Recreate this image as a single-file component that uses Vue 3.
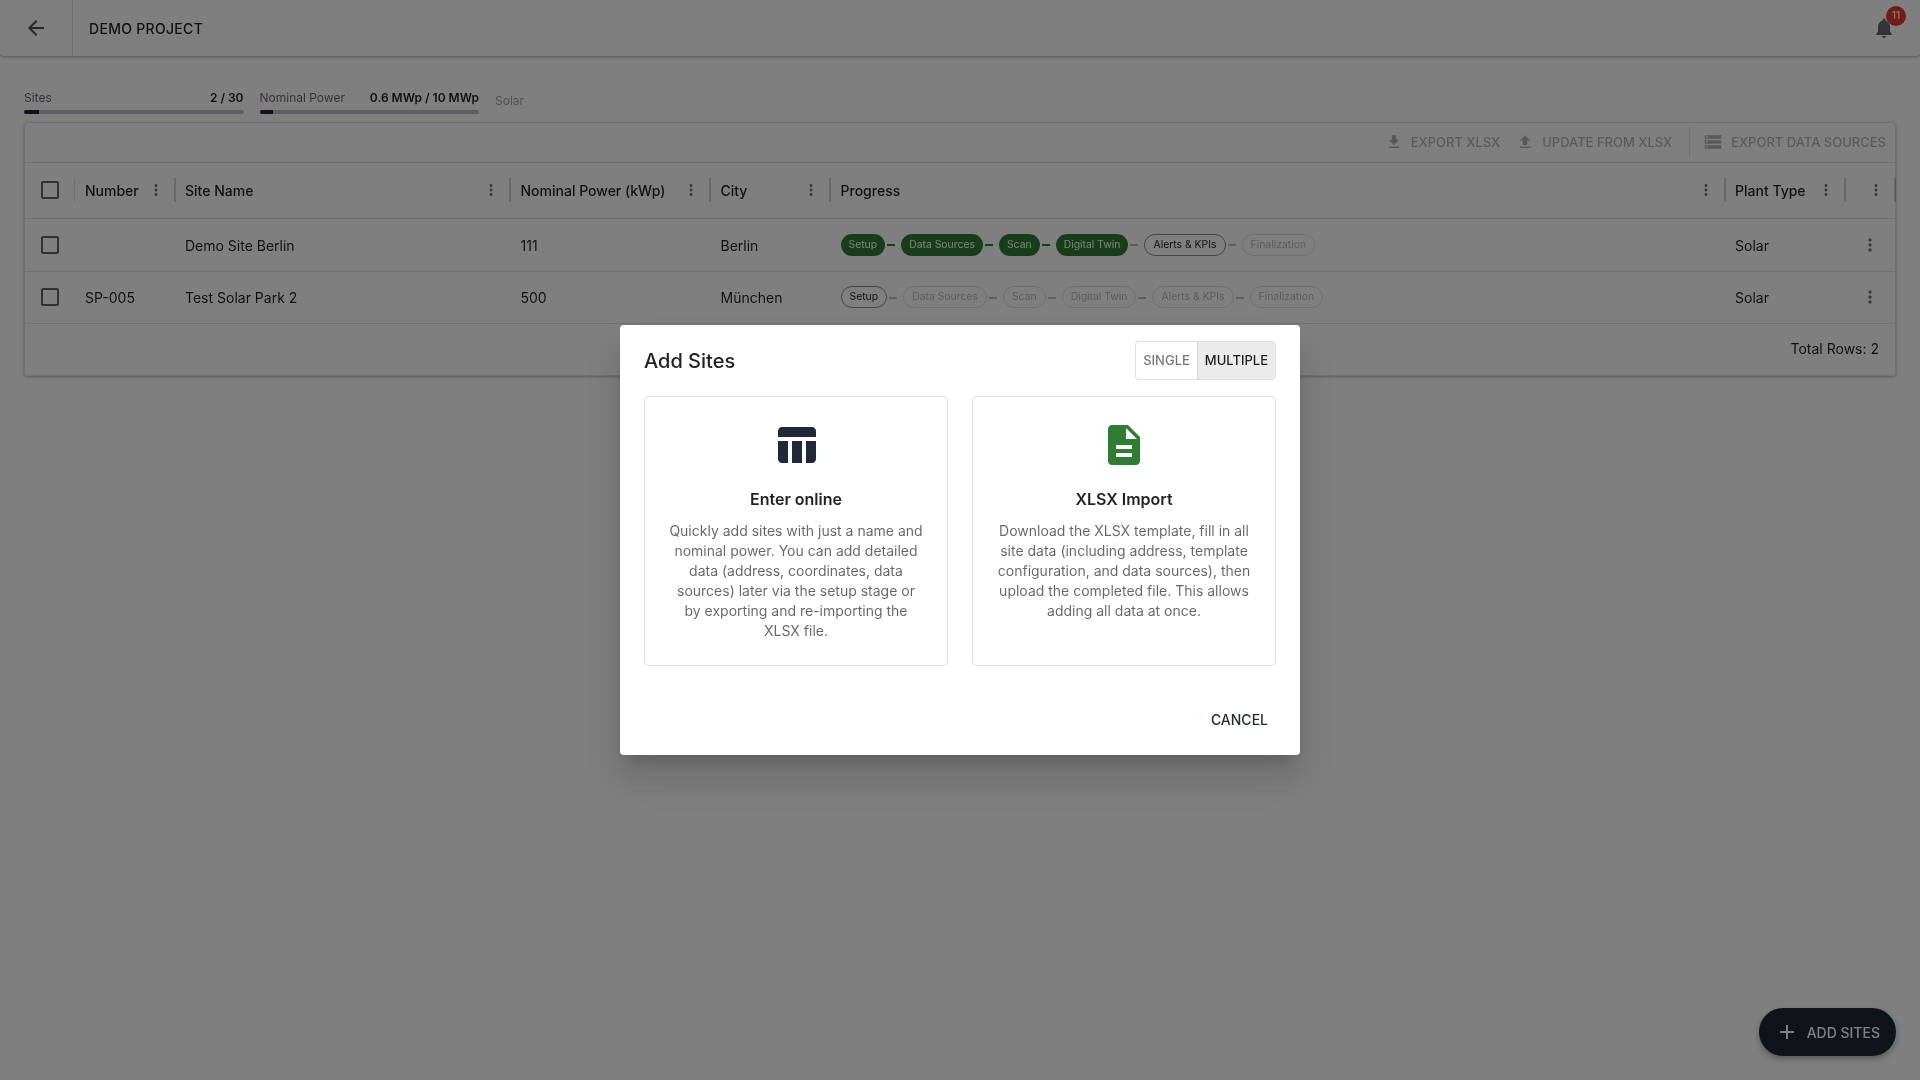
<script setup>
const ICON = {
  back: 'M20 11H7.83l5.59-5.59L12 4l-8 8 8 8 1.41-1.41L7.83 13H20v-2z',
  bell: 'M12 22c1.1 0 2-.9 2-2h-4c0 1.1.89 2 2 2zm6-6v-5c0-3.07-1.64-5.64-4.5-6.32V4c0-.83-.67-1.5-1.5-1.5s-1.5.67-1.5 1.5v.68C7.63 5.36 6 7.92 6 11v5l-2 2v1h16v-1l-2-2z',
  down: 'M5 20h14v-2H5v2zM19 9h-4V3H9v6H5l7 7 7-7z',
  up: 'M5 20h14v-2H5v2zm0-10h4v6h6v-6h4l-7-7-7 7z',
  storage: 'M2 20h20v-4H2v4zm2-3h2v2H4v-2zM2 4v4h20V4H2zm4 3H4V5h2v2zm-4 7h20v-4H2v4zm2-3h2v2H4v-2z',
  box: 'M19 5v14H5V5h14m0-2H5c-1.1 0-2 .9-2 2v14c0 1.1.9 2 2 2h14c1.1 0 2-.9 2-2V5c0-1.1-.9-2-2-2z',
  more: 'M12 8c1.1 0 2-.9 2-2s-.9-2-2-2-2 .9-2 2 .9 2 2 2zm0 2c-1.1 0-2 .9-2 2s.9 2 2 2 2-.9 2-2-.9-2-2-2zm0 6c-1.1 0-2 .9-2 2s.9 2 2 2 2-.9 2-2-.9-2-2-2z',
  table: 'M10 10.02h5V21h-5zM17 21h3c1.1 0 2-.9 2-2v-9h-5v11zm3-18H5c-1.1 0-2 .9-2 2v3h19V5c0-1.1-.9-2-2-2zM3 19c0 1.1.9 2 2 2h3V10H3v9z',
  file: 'M14 2H6c-1.1 0-1.99.9-1.99 2L4 20c0 1.1.89 2 1.99 2H18c1.1 0 2-.9 2-2V8l-6-6zm2 16H8v-2h8v2zm0-4H8v-2h8v2zm-3-5V3.5L18.5 9H13z',
  plus: 'M19 13h-6v6h-2v-6H5v-2h6V5h2v6h6v2z'
}
const stats = [
  { label: 'Sites', value: '2 / 30', pct: 6.67 },
  { label: 'Nominal Power', value: '0.6 MWp / 10 MWp', pct: 6 }
]
const actions = [
  { icon: ICON.down, label: 'EXPORT XLSX' },
  { icon: ICON.up, label: 'UPDATE FROM XLSX' }
]
const columns = ['Number', 'Site Name', 'Nominal Power (kWp)', 'City', 'Progress', 'Plant Type', '']
const stepNames = ['Setup', 'Data Sources', 'Scan', 'Digital Twin', 'Alerts & KPIs', 'Finalization']
const rows = [
  { number: '', name: 'Demo Site Berlin', power: '111', city: 'Berlin', done: 4 },
  { number: 'SP-005', name: 'Test Solar Park 2', power: '500', city: 'München', done: 0 }
]
function stepClass(i, done) {
  if (i < done) return 'done'
  if (i === done) return 'current'
  return 'todo'
}
const options = [
  {
    icon: ICON.table,
    tone: 'navy',
    title: 'Enter online',
    text: 'Quickly add sites with just a name and nominal power. You can add detailed data (address, coordinates, data sources) later via the setup stage or by exporting and re-importing the XLSX file.'
  },
  {
    icon: ICON.file,
    tone: 'green',
    title: 'XLSX Import',
    text: 'Download the XLSX template, fill in all site data (including address, template configuration, and data sources), then upload the completed file. This allows adding all data at once.'
  }
]
</script>

<template>
  <div class="page">
    <div class="under">
      <header class="topbar">
        <div class="back">
          <svg class="i24" viewBox="0 0 24 24"><path :d="ICON.back" /></svg>
        </div>
        <div class="project">DEMO PROJECT</div>
        <div class="bell">
          <svg class="i24" viewBox="0 0 24 24"><path :d="ICON.bell" /></svg>
          <span class="badge">11</span>
        </div>
      </header>

      <main class="content">
        <section class="stats">
          <div v-for="s in stats" :key="s.label" class="stat">
            <div class="stat-text">
              <span class="stat-label">{{ s.label }}</span>
              <span class="stat-value">{{ s.value }}</span>
            </div>
            <div class="track"><div class="fill" :style="{ width: s.pct + '%' }"></div></div>
          </div>
          <span class="solar">Solar</span>
        </section>

        <section class="card">
          <div class="toolbar">
            <div v-for="a in actions" :key="a.label" class="tool">
              <svg class="i18" viewBox="0 0 24 24"><path :d="a.icon" /></svg>
              <span>{{ a.label }}</span>
            </div>
            <div class="tool-sep"></div>
            <div class="tool last">
              <svg class="i20" viewBox="0 0 24 24"><path :d="ICON.storage" /></svg>
              <span>EXPORT DATA SOURCES</span>
            </div>
          </div>

          <div class="grid head">
            <div class="cell center sep thin">
              <svg class="i24 box" viewBox="0 0 24 24"><path :d="ICON.box" /></svg>
            </div>
            <div v-for="c in columns" :key="c" class="cell hcell sep">
              <span>{{ c }}</span>
              <svg class="i18 kebab" viewBox="0 0 24 24"><path :d="ICON.more" /></svg>
            </div>
          </div>

          <div v-for="r in rows" :key="r.name" class="grid row">
            <div class="cell center">
              <svg class="i24 box" viewBox="0 0 24 24"><path :d="ICON.box" /></svg>
            </div>
            <div class="cell">{{ r.number }}</div>
            <div class="cell">{{ r.name }}</div>
            <div class="cell">{{ r.power }}</div>
            <div class="cell">{{ r.city }}</div>
            <div class="cell steps">
              <template v-for="(n, i) in stepNames" :key="n">
                <span class="chip" :class="stepClass(i, r.done)">{{ n }}</span>
                <span v-if="i < stepNames.length - 1" class="link" :class="{ on: i < r.done - 1 }"></span>
              </template>
            </div>
            <div class="cell">Solar</div>
            <div class="cell center">
              <svg class="i20 kebab" viewBox="0 0 24 24"><path :d="ICON.more" /></svg>
            </div>
          </div>

          <div class="foot">Total Rows: 2</div>
        </section>
      </main>

      <button class="fab">
        <svg class="i24" viewBox="0 0 24 24"><path :d="ICON.plus" /></svg>
        <span>ADD SITES</span>
      </button>
    </div>

    <div class="overlay">
      <div class="dialog">
        <div class="dialog-head">
          <h2 class="dialog-title">Add Sites</h2>
          <div class="toggle">
            <span class="opt">SINGLE</span>
            <span class="opt active">MULTIPLE</span>
          </div>
        </div>
        <div class="dialog-body">
          <div v-for="o in options" :key="o.title" class="option">
            <svg class="i48" :class="o.tone" viewBox="0 0 24 24"><path :d="o.icon" /></svg>
            <div class="option-title">{{ o.title }}</div>
            <p class="option-text">{{ o.text }}</p>
          </div>
        </div>
        <div class="dialog-actions">
          <button class="cancel">CANCEL</button>
        </div>
      </div>
    </div>
  </div>
</template>

<style>
html, body { margin: 0; background: #fff; }
</style>

<style scoped>
.page {
  min-height: 1080px;
  background: #fff;
  font-family: Inter, "Liberation Sans", sans-serif;
  font-size: 14px;
  color: rgba(0, 0, 0, 0.87);
}
.under {
  position: relative;
  height: 1080px;
  filter: blur(0.5px);
}
svg { display: block; fill: currentColor; flex: none; }
.i18 { width: 18px; height: 18px; }
.i20 { width: 20px; height: 20px; }
.i24 { width: 24px; height: 24px; }
.i48 { width: 48px; height: 48px; }

.topbar {
  display: flex;
  align-items: center;
  height: 56px;
  background: #fff;
  border-radius: 0 0 4px 4px;
  box-shadow: 0 1px 3px rgba(0, 0, 0, 0.35);
}
.back {
  width: 73px;
  height: 56px;
  box-sizing: border-box;
  display: flex;
  align-items: center;
  justify-content: center;
  padding-right: 1px;
  border-right: 1px solid rgba(0, 0, 0, 0.12);
  color: rgba(0, 0, 0, 0.7);
}
.project {
  margin-left: 16px;
  font-weight: 500;
  letter-spacing: 0.3px;
  flex: 1;
}
.bell {
  position: relative;
  width: 24px;
  margin-right: 24px;
  color: rgba(0, 0, 0, 0.6);
}
.badge {
  position: absolute;
  top: -10px;
  left: 14px;
  min-width: 20px;
  height: 20px;
  border-radius: 10px;
  background: #e53935;
  color: #fff;
  font-size: 10.5px;
  line-height: 20px;
  text-align: center;
}

.content { padding: 34px 24px 0; }
.stats {
  display: flex;
  gap: 16px;
  height: 32px;
}
.stat { width: 219.5px; }
.stat-text {
  display: flex;
  justify-content: space-between;
  font-size: 12px;
  line-height: 16px;
  height: 20px;
}
.stat-label { color: rgba(0, 0, 0, 0.6); }
.stat-value { font-weight: 600; }
.track {
  height: 4px;
  border-radius: 2px;
  overflow: hidden;
  background: #bcbec6;
}
.fill { height: 100%; background: #1f2937; }
.solar {
  font-size: 12px;
  line-height: 20px;
  padding-top: 1px;
  color: rgba(0, 0, 0, 0.38);
}

.card {
  border: 1px solid #e0e0e0;
  border-radius: 4px;
  box-shadow: 0 1px 3px rgba(0, 0, 0, 0.3);
}
.toolbar {
  height: 38px;
  padding-bottom: 1px;
  display: flex;
  align-items: center;
  justify-content: flex-end;
  border-bottom: 1px solid #e0e0e0;
  color: rgba(0, 0, 0, 0.3);
  font-size: 13px;
  font-weight: 500;
}
.tool { display: flex; align-items: center; gap: 8px; margin-right: 17px; }
.tool:first-child { margin-right: 16px; }
.tool-sep {
  width: 1px;
  height: 30px;
  background: rgba(0, 0, 0, 0.12);
  margin-right: 13px;
}
.tool.last { margin-right: 9px; }

.grid {
  display: grid;
  grid-template-columns: 50px 100px 335px 200px 120px 1fr 120px 50px;
  border-bottom: 1px solid #e0e0e0;
  box-sizing: border-box;
}
.head { height: 56px; font-weight: 500; }
.row { height: 53px; }
.row + .row { height: 52px; }
.head svg,
.row + .row svg,
.row + .row .chip { margin-bottom: 1px; }
.cell {
  display: flex;
  align-items: center;
  padding: 0 10px;
  min-width: 0;
  position: relative;
}
.cell:nth-child(4),
.cell:nth-child(5),
.cell:nth-child(6) { padding-left: 10.5px; }
.cell.center { justify-content: center; padding: 0; }
.hcell { justify-content: space-between; }
.sep::after {
  content: "";
  position: absolute;
  right: -1px;
  top: 15px;
  width: 2px;
  height: 24px;
  background: rgba(0, 0, 0, 0.18);
}
.sep.thin::after { width: 1px; right: 0; background: rgba(0, 0, 0, 0.1); }
.box { color: rgba(0, 0, 0, 0.6); }
.kebab { color: rgba(0, 0, 0, 0.54); }

.chip {
  display: flex;
  align-items: center;
  box-sizing: border-box;
  height: 22px;
  padding: 0 8px 1px;
  border-radius: 11px;
  font-size: 10.4px;
  white-space: nowrap;
}
.chip.done { background: #2e7d32; color: #fff; }
.chip.current { border: 1px solid rgba(0, 0, 0, 0.45); }
.chip.todo { border: 1px solid rgba(0, 0, 0, 0.12); color: rgba(0, 0, 0, 0.3); }
.link {
  width: 8px;
  height: 2px;
  margin: 0 6px 0 2px;
  background: rgba(0, 0, 0, 0.25);
}
.link.on { background: #2e7d32; }

.foot {
  height: 48px;
  padding-bottom: 3px;
  display: flex;
  align-items: center;
  justify-content: flex-end;
  padding-right: 16px;
}

.fab {
  position: absolute;
  right: 24px;
  bottom: 24px;
  height: 48px;
  padding: 0 16px;
  display: flex;
  align-items: center;
  gap: 8px;
  border: 0;
  border-radius: 24px;
  background: #1f2937;
  color: #fff;
  font-family: inherit;
  font-size: 14px;
  font-weight: 500;
  box-shadow: 0 3px 6px rgba(0, 0, 0, 0.3);
}

.overlay {
  position: fixed;
  inset: 0;
  display: flex;
  align-items: center;
  justify-content: center;
  background: rgba(0, 0, 0, 0.5);
}
.dialog {
  width: 680px;
  background: #fff;
  border-radius: 4px;
  box-shadow: 0 11px 15px -7px rgba(0, 0, 0, 0.2), 0 24px 38px 3px rgba(0, 0, 0, 0.14);
}
.dialog-head {
  display: flex;
  align-items: center;
  justify-content: space-between;
  padding: 16px 24px;
}
.dialog-title { margin: 0; font-size: 20px; font-weight: 500; line-height: 32px; }
.toggle {
  display: flex;
  height: 39px;
  box-sizing: border-box;
  border: 1px solid #e0e0e0;
  border-radius: 4px;
  overflow: hidden;
  font-size: 13px;
  font-weight: 500;
  color: rgba(0, 0, 0, 0.54);
}
.opt { display: flex; align-items: center; padding: 0 7px 1px; }
.opt.active {
  background: #ebebeb;
  border-left: 1px solid #d8d8d8;
  color: rgba(0, 0, 0, 0.87);
}
.dialog-body {
  display: grid;
  grid-template-columns: 1fr 1fr;
  gap: 24px;
  padding: 0 24px 20px;
}
.option {
  display: flex;
  flex-direction: column;
  align-items: center;
  text-align: center;
  padding: 24px;
  border: 1px solid #e0e0e0;
  border-radius: 4px;
}
.navy { color: #1f2937; }
.green { color: #2e7d32; }
.option-title {
  margin-top: 16px;
  margin-bottom: 8px;
  font-size: 16px;
  font-weight: 600;
  line-height: 28px;
}
.option-text {
  margin: 0;
  line-height: 20px;
  color: rgba(0, 0, 0, 0.6);
}
.dialog-actions {
  display: flex;
  justify-content: flex-end;
  padding: 15px 24px 18px;
}
.cancel {
  height: 36px;
  padding: 0 8px;
  border: 0;
  background: transparent;
  color: #1f2937;
  font-family: inherit;
  font-size: 14px;
  font-weight: 500;
}
</style>
